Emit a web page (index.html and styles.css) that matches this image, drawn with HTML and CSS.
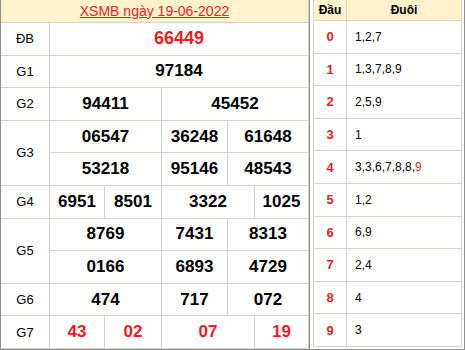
FILE: index.html
```html
<!DOCTYPE html>
<html lang="vi">
<head>
    <meta charset="UTF-8">
    <meta name="viewport" content="width=device-width, initial-scale=1.0">
    <title>XSMB ngày 19-06-2022</title>
    <link rel="stylesheet" href="styles.css">
</head>
<body>
    <div class="board">
        <!-- Bảng kết quả -->
        <div class="results">
            <div class="cell title span6"><a href="#">XSMB ngày 19-06-2022</a></div>

            <div class="cell label">ĐB</div>
            <div class="cell num special span5">66449</div>

            <div class="cell label">G1</div>
            <div class="cell num span5">97184</div>

            <div class="cell label">G2</div>
            <div class="cell num span2">94411</div>
            <div class="cell num span3">45452</div>

            <div class="cell label rows2">G3</div>
            <div class="cell num span2">06547</div>
            <div class="cell num">36248</div>
            <div class="cell num span2">61648</div>
            <div class="cell num span2">53218</div>
            <div class="cell num">95146</div>
            <div class="cell num span2">48543</div>

            <div class="cell label">G4</div>
            <div class="cell num">6951</div>
            <div class="cell num">8501</div>
            <div class="cell num span2">3322</div>
            <div class="cell num">1025</div>

            <div class="cell label rows2">G5</div>
            <div class="cell num span2">8769</div>
            <div class="cell num">7431</div>
            <div class="cell num span2">8313</div>
            <div class="cell num span2">0166</div>
            <div class="cell num">6893</div>
            <div class="cell num span2">4729</div>

            <div class="cell label">G6</div>
            <div class="cell num span2">474</div>
            <div class="cell num">717</div>
            <div class="cell num span2">072</div>

            <div class="cell label">G7</div>
            <div class="cell num red">43</div>
            <div class="cell num red">02</div>
            <div class="cell num red span2">07</div>
            <div class="cell num red">19</div>
        </div>

        <!-- Bảng đầu đuôi -->
        <div class="tails">
            <div class="cell head">Đầu</div>
            <div class="cell head">Đuôi</div>

            <div class="cell digit">0</div><div class="cell list">1,2,7</div>
            <div class="cell digit">1</div><div class="cell list">1,3,7,8,9</div>
            <div class="cell digit">2</div><div class="cell list">2,5,9</div>
            <div class="cell digit">3</div><div class="cell list">1</div>
            <div class="cell digit">4</div><div class="cell list">3,3,6,7,8,8,<span class="red">9</span></div>
            <div class="cell digit">5</div><div class="cell list">1,2</div>
            <div class="cell digit">6</div><div class="cell list">6,9</div>
            <div class="cell digit">7</div><div class="cell list">2,4</div>
            <div class="cell digit">8</div><div class="cell list">4</div>
            <div class="cell digit">9</div><div class="cell list">3</div>
        </div>
    </div>
</body>
</html>
```

FILE: styles.css
```css
body {
    margin: 0;
    font-family: "Liberation Sans", Arial, sans-serif;
    color: #000;
    background: #fff;
}
.board {
    display: flex;
    align-items: flex-start;
    width: 465px;
    height: 350px;
    box-sizing: border-box;
    border: 1px solid #8f8f8f;
    border-top: none;
}
.cell {
    background: #fff;
    display: flex;
    align-items: center;
    justify-content: center;
}
.red {
    color: #ed1c24;
}

/* left table */
.results {
    display: grid;
    grid-template-columns: 48px 54px 56px 65px 26px 53px;
    grid-template-rows: 22px repeat(10, 1fr);
    gap: 1px;
    width: 309px;
    height: 349px;
    box-sizing: border-box;
    padding: 0 1px 1px 0;
    background: #d6d1c9;
    border-right: 1px solid #8f8f8f;
}
.span2 { grid-column: span 2; }
.span3 { grid-column: span 3; }
.span5 { grid-column: span 5; }
.span6 { grid-column: span 6; }
.rows2 { grid-row: span 2; }

.title {
    background: #fff2cc;
    font-size: 14px;
}
.title a {
    color: #ed1c24;
    text-decoration: underline;
}
.label {
    font-size: 13px;
}
.num {
    font-size: 17px;
    font-weight: bold;
}
.num.special {
    font-size: 18px;
    color: #ed1c24;
}

/* right table */
.tails {
    display: grid;
    grid-template-columns: 32px 114px;
    grid-template-rows: 20px repeat(10, 1fr);
    gap: 1px;
    height: 347px;
    box-sizing: border-box;
    margin-left: 3px;
    padding: 0 1px 1px 1px;
    background: #d6d1c9;
}
.head {
    background: #fff2cc;
    font-size: 12px;
    font-weight: bold;
}
.digit {
    font-size: 13px;
    font-weight: bold;
    color: #ed1c24;
}
.list {
    justify-content: flex-start;
    padding-left: 8px;
    font-size: 12px;
}
```
